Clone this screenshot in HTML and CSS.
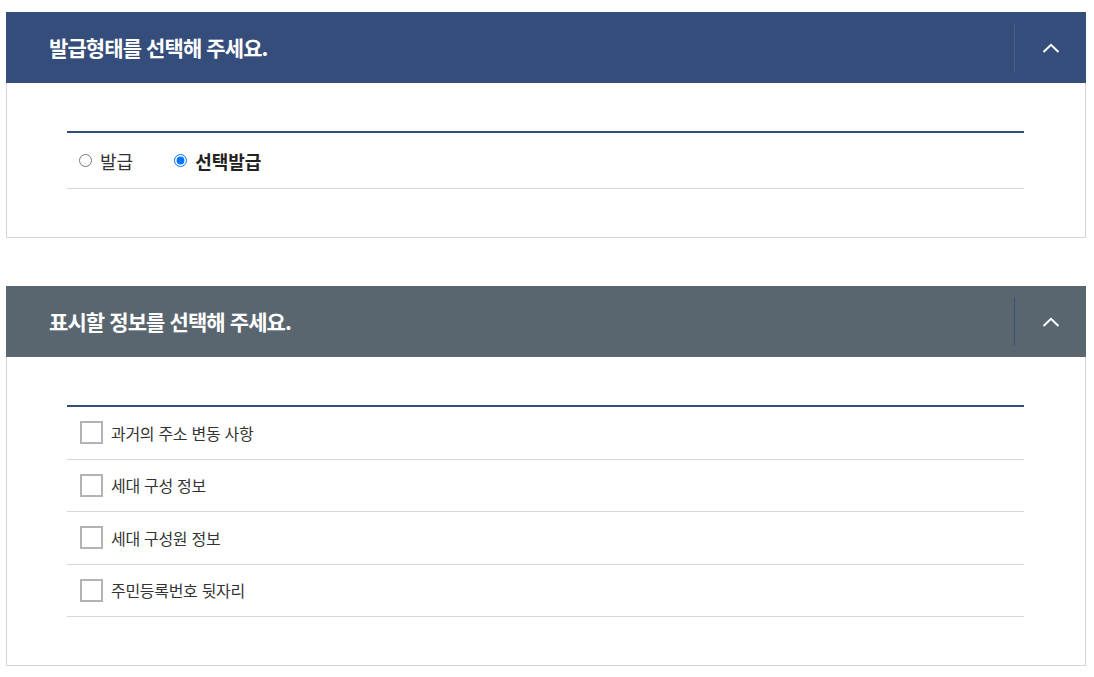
FILE: index.html
```html
<!DOCTYPE html>
<html lang="ko">
<head>
<meta charset="utf-8">
<link rel="stylesheet" href="styles.css">
</head>
<body>
<section class="panel">
  <div class="panel-head head-blue">
    <h2 class="panel-title">발급형태를 선택해 주세요.</h2>
    <button class="toggle divider-light" type="button" aria-label="접기">
      <svg width="18" height="10" viewBox="0 0 18 10"><polyline points="1.5,9 9,1.8 16.5,9" fill="none" stroke="#fff" stroke-width="2"/></svg>
    </button>
  </div>
  <div class="panel-body">
    <div class="list">
      <div class="radio-row">
        <label class="radio"><input type="radio" name="type"><span>발급</span></label>
        <label class="radio selected"><input type="radio" name="type" checked><span>선택발급</span></label>
      </div>
    </div>
  </div>
</section>

<section class="panel">
  <div class="panel-head head-gray">
    <h2 class="panel-title">표시할 정보를 선택해 주세요.</h2>
    <button class="toggle divider-blue" type="button" aria-label="접기">
      <svg width="18" height="10" viewBox="0 0 18 10"><polyline points="1.5,9 9,1.8 16.5,9" fill="none" stroke="#fff" stroke-width="2"/></svg>
    </button>
  </div>
  <div class="panel-body">
    <div class="list">
      <label class="check-row"><span class="box"></span><span>과거의 주소 변동 사항</span></label>
      <label class="check-row"><span class="box"></span><span>세대 구성 정보</span></label>
      <label class="check-row"><span class="box"></span><span>세대 구성원 정보</span></label>
      <label class="check-row"><span class="box"></span><span>주민등록번호 뒷자리</span></label>
    </div>
  </div>
</section>
</body>
</html>
```

FILE: styles.css
```css
* { box-sizing: border-box; }
html, body { background: #fff; }
body {
  margin: 0;
  padding: 12px 8px 0 6px;
  font-family: "Noto Sans CJK KR", "Noto Sans", sans-serif;
  color: #222;
}
.panel {
  width: 1080px;
  margin-bottom: 48px;
}
.panel:last-child { margin-bottom: 0; }
.panel-head {
  height: 71px;
  display: flex;
  align-items: center;
}
.head-blue { background: #354d7a; }
.head-gray { background: #5a666f; }
.panel-title {
  flex: 1;
  margin: 0;
  padding-left: 43px;
  color: #fff;
  font-size: 21px;
  font-weight: 700;
  letter-spacing: -0.9px;
  line-height: 1;
}
.toggle {
  width: 72px;
  height: 48px;
  border: 0;
  background: transparent;
  display: flex;
  align-items: center;
  justify-content: center;
  padding: 0;
  cursor: pointer;
}
.divider-light { border-left: 1px solid #4b6089; }
.divider-blue { border-left: 1px solid #3b4f7e; }
.panel-body {
  border: 1px solid #d5d5d5;
  border-top: 0;
  padding: 48px 61px 48px 60px;
}
.list {
  border-top: 2px solid #344d7a;
}
.radio-row {
  height: 56px;
  border-bottom: 1px solid #d8d8d8;
  display: flex;
  align-items: center;
  padding-left: 12px;
  gap: 41px;
}
.radio {
  display: flex;
  align-items: center;
  font-size: 18px;
  color: #333;
  cursor: pointer;
}
.radio input {
  margin: 0 8px 0 0;
  width: 13px;
  height: 13px;
}
.radio.selected { font-weight: 700; color: #222; }
.check-row {
  height: 52.5px;
  border-bottom: 1px solid #d8d8d8;
  display: flex;
  align-items: center;
  padding-left: 13px;
  font-size: 16px;
  color: #333;
  letter-spacing: -0.3px;
  cursor: pointer;
}
.box {
  width: 23px;
  height: 23px;
  border: 2px solid #b3b3b3;
  background: #fff;
  margin-right: 8px;
  flex: none;
}
```
